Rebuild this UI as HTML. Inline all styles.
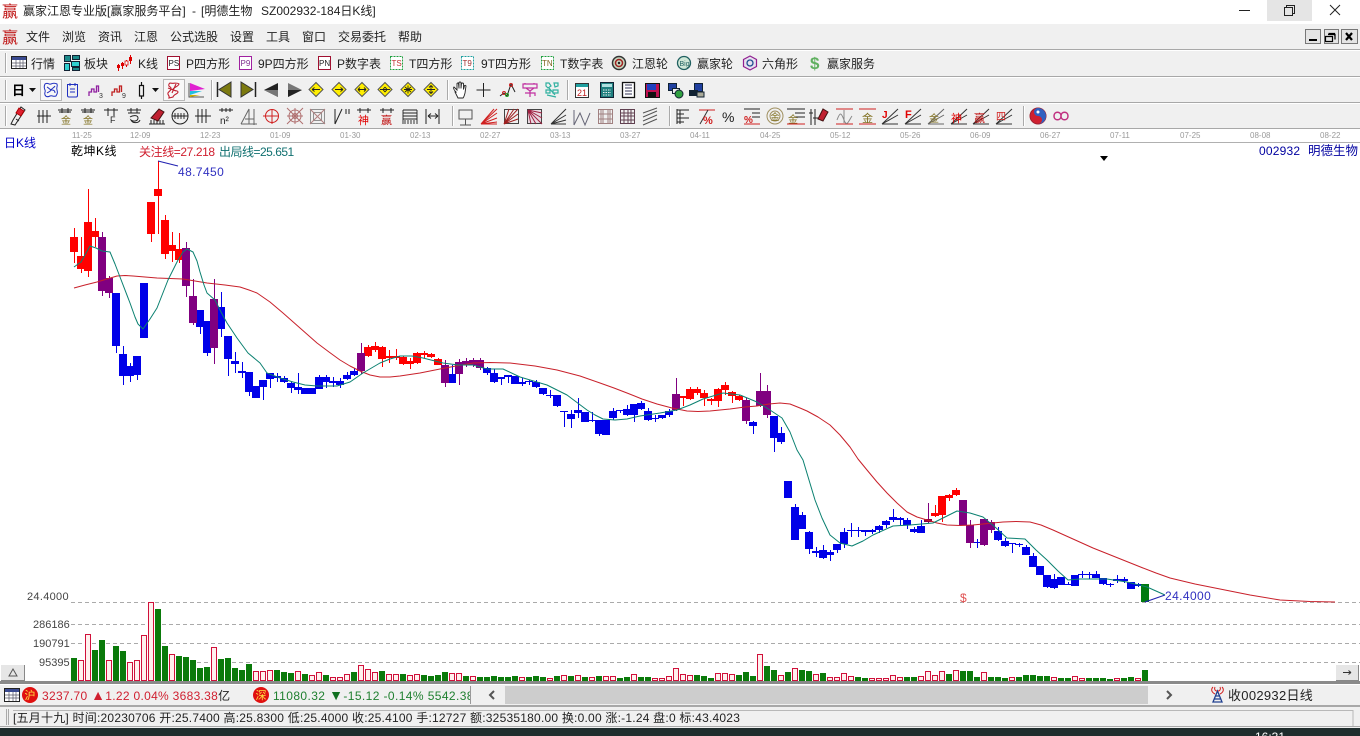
<!DOCTYPE html>
<html><head><meta charset="utf-8"><title>赢家江恩专业版</title>
<style>
html,body{margin:0;padding:0;background:#fff;overflow:hidden}
svg{display:block}
text{font-family:"Liberation Sans","Noto Sans CJK SC",sans-serif;font-size:12px;fill:#222}
.d{font-size:8px;fill:#999}
.a{font-size:11px;fill:#444}
.i{font-size:8px}
</style></head><body>
<svg width="1360" height="736" viewBox="0 0 1360 736" xmlns="http://www.w3.org/2000/svg">
<!-- backgrounds -->
<rect width="1360" height="736" fill="#fff"/>
<rect y="24" width="1360" height="105" fill="#f0f0f0"/>
<g fill="#a8a8a8"><rect y="49" width="1360" height="1"/><rect y="76" width="1360" height="1"/><rect y="102" width="1360" height="1"/><rect y="128" width="1360" height="1"/></g>
<g fill="#fff"><rect y="50" width="1360" height="1"/><rect y="77" width="1360" height="1"/><rect y="103" width="1360" height="1"/></g>
<!-- title -->
<text x="2" y="17" style="font-size:16px;fill:#c01818">赢</text>
<text x="23" y="15">赢家江恩专业版[赢家服务平台]</text><text x="192" y="15">-</text><text x="201" y="15">[明德生物</text><text x="261" y="15">SZ002932-184日K线]</text>
<rect x="1267" width="45" height="21" fill="#e5e5e5"/>
<path d="M1239 10.500h11" stroke="#222"/>
<path d="M1284.500 7.500h8v8h-8zM1286.500 7.500v-2h8v8h-2" fill="none" stroke="#222"/>
<path d="M1330 5l10 10M1340 5l-10 10" stroke="#222"/>
<!-- menu -->
<text x="2" y="43" style="font-size:16px;fill:#c01818">赢</text>
<g><text x="26" y="41">文件</text><text x="62" y="41">浏览</text><text x="98" y="41">资讯</text><text x="134" y="41">江恩</text><text x="170" y="41">公式选股</text><text x="230" y="41">设置</text><text x="266" y="41">工具</text><text x="302" y="41">窗口</text><text x="338" y="41">交易委托</text><text x="398" y="41">帮助</text></g>
<!-- mdi buttons -->
<g fill="#e4e4e4" stroke="#777"><rect x="1305.500" y="29.500" width="15" height="14"/><rect x="1324.500" y="29.500" width="14" height="14"/><rect x="1341.500" y="29.500" width="16" height="14"/></g>
<path d="M1309 40h8" stroke="#000" stroke-width="2"/>
<path d="M1328.500 33.500h6v2M1325.500 36.500h7v5h-7zM1328 34.500h7v5" fill="none" stroke="#000" stroke-width="1.200"/>
<path d="M1346 33l6 7M1352 33l-6 7" stroke="#000" stroke-width="2.200"/>
<!-- grips -->
<g stroke="#aaa"><path d="M5.500 53v20M5.500 80v20M5.500 106v20M211.500 80v20M447.500 80v20M452.500 106v20M567.500 80v20M669.500 106v20M1023.500 106v20"/></g>
<g stroke="#fff"><path d="M6.500 53v20M6.500 80v20M6.500 106v20M212.500 80v20M448.500 80v20M453.500 106v20M568.500 80v20M670.500 106v20M1024.500 106v20"/></g>
<!-- toolbar 1 -->
<g>
<rect x="11.500" y="56.500" width="15" height="12" fill="#fff" stroke="#222"/><rect x="12" y="57" width="14" height="3" fill="#3a4a90"/><path d="M12 63h14M12 66h14M16 60v8M20 60v8M23 60v8" stroke="#556" stroke-width=".7"/>
<g fill="#1c8a8a" stroke="#123"><rect x="64.500" y="55.500" width="6" height="6"/><rect x="72.500" y="55.500" width="7" height="4"/><rect x="64.500" y="63.500" width="5" height="7" fill="#30d0d0"/><rect x="71.500" y="61.500" width="8" height="5" fill="#30d0d0"/><rect x="72.500" y="67.500" width="7" height="3"/></g>
<path d="M118.500 64v7M122.500 62v7M126.500 60v7M130.500 55v9" stroke="#d00"/><path d="M117 65h3v3h-3zM121 63h3v3h-3zM129 57h3v4h-3z" fill="#d00"/><path d="M125 61h3v4h-3z" fill="#fff" stroke="#d00" stroke-width=".8"/>
<text x="138" y="68">K线</text>
<text x="31" y="68">行情</text><text x="84" y="68">板块</text>
<rect x="167.500" y="56.500" width="12" height="13" fill="#fff" stroke="#a01030"/><text class="i" x="168.500" y="66">PS</text><text x="186" y="68">P四方形</text>
<rect x="239.500" y="56.500" width="12" height="13" fill="#fff" stroke="#a020a0"/><text class="i" x="240.500" y="66" style="fill:#803090">P9</text><text x="258" y="68">9P四方形</text>
<rect x="318.500" y="56.500" width="12" height="13" fill="#fff" stroke="#a01030"/><text class="i" x="319" y="66">PN</text><text x="337" y="68">P数字表</text>
<rect x="390.500" y="56.500" width="12" height="13" fill="#fff" stroke="#20a040" stroke-dasharray="2 1"/><text class="i" x="391.500" y="66" style="fill:#c03030">TS</text><text x="409" y="68">T四方形</text>
<rect x="461.500" y="56.500" width="12" height="13" fill="#fff" stroke="#20a0a0" stroke-dasharray="2 1"/><text class="i" x="462.500" y="66" style="fill:#a03030">T9</text><text x="481" y="68">9T四方形</text>
<rect x="541.500" y="56.500" width="12" height="13" fill="#fff" stroke="#20a040" stroke-dasharray="2 1"/><text class="i" x="542" y="66" style="fill:#806020">TN</text><text x="560" y="68">T数字表</text>
<circle cx="619" cy="63" r="6.500" fill="#c8d8c0" stroke="#333" stroke-width="1.500"/><circle cx="619" cy="63" r="3.500" fill="none" stroke="#a02020" stroke-width="1.500"/><circle cx="619" cy="63" r="1.200" fill="#222"/><text x="632" y="68">江恩轮</text>
<circle cx="684" cy="63" r="6.500" fill="#d0e8d8" stroke="#206060" stroke-width="1.300"/><text x="679.500" y="66" style="font-size:7px;fill:#206060">Big</text><text x="697" y="68">赢家轮</text>
<path d="M750 56l6.500 3.500v7l-6.500 3.500-6.500-3.500v-7z" fill="#e8e0f0" stroke="#902090" stroke-width="1.200"/><circle cx="750" cy="63" r="3" fill="none" stroke="#205090" stroke-width="1.300"/><text x="762" y="68">六角形</text>
<text x="810" y="69" style="font-size:17px;font-weight:bold;fill:#60b060">$</text><text x="827" y="68">赢家服务</text>
</g>
<!-- toolbar 2 -->
<g>
<text x="12" y="95" style="font-size:13px;font-weight:bold;fill:#000">日</text><path d="M29 88h7l-3.500 4z" fill="#111"/>
<rect x="40.500" y="79.500" width="21" height="21" fill="#f8f8f8" stroke="#b8b8b8"/>
<path d="M45 84c3-2 4 1 6 0s4-1 6 0c1 3-1 3 0 6s0 4-1 6c-3 1-4-1-6 0s-4 1-5-1c-1-3 1-3 0-5s-1-4 0-6zM47 87c2 1 3 3 5 3s3 1 3 3M55 86c-1 2-3 2-4 4s-3 2-4 3" fill="none" stroke="#2030c0"/>
<path d="M67.500 84.500h10v11q0 1.500-1.500 1.500h-7q-1.500 0-1.500-1.500zM70 83v3M75 83v3M70 89h5M70 92h5" fill="none" stroke="#2030c0"/>
<path d="M89 96v-4h2.500v-3h2.500v3h2.500v-6h2v6" fill="none" stroke="#9020a0" stroke-width="1.300"/><text class="i" x="99" y="98" style="fill:#333;font-size:7px">3</text>
<path d="M112 96v-4h2.500v-3h2.500v3h2.500v-6h2v6" fill="none" stroke="#c02020" stroke-width="1.300"/><text class="i" x="122" y="98" style="fill:#333;font-size:7px">9</text>
<path d="M141.500 82v3M141.500 96v3M139.500 85.500h4v10.500h-4z" fill="none" stroke="#111" stroke-width="1.200"/><path d="M152 88h7l-3.500 4z" fill="#111"/>
<rect x="163.500" y="79.500" width="21" height="21" fill="#f8f8f8" stroke="#b8b8b8"/>
<path d="M170 83c3 1 7-1 9 1-1 3-5 3-6 5s5 1 5 3-4 2-5 5l-4 1c1-3-2-3-1-5s4-3 3-5-3-1-2-4zM168 88l8 3M176 84l-4 9" fill="none" stroke="#c02030" stroke-width="1.100"/>
<path d="M189 83v14h15" fill="none" stroke="#555"/><path d="M190 83l15 6-15 2z" fill="#e020d0"/><path d="M190 91l12 0-12 4z" fill="#20c0e0"/><path d="M190 95h10l-10 2z" fill="#d0b000"/>
<path d="M217.500 82v15" stroke="#222" stroke-width="1.500"/><path d="M231 82v15l-12-7.500z" fill="#7c7a10" stroke="#333"/>
<path d="M255.500 82v15" stroke="#222" stroke-width="1.500"/><path d="M241 82v15l12-7.500z" fill="#7c7a10" stroke="#333"/>
<path d="M278 83v14l-14-7z" fill="#222"/><path d="M278 90v7l-14-7z" fill="#777"/>
<path d="M288 83v14l14-7z" fill="#777"/><path d="M288 90v7l14-7z" fill="#222"/>
<g fill="#ffee00" stroke="#555"><path d="M316 82.500l7 7-7 7-7-7zM339 82.500l7 7-7 7-7-7zM362 82.500l7 7-7 7-7-7zM385 82.500l7 7-7 7-7-7zM408 82.500l7 7-7 7-7-7zM431 82.500l7 7-7 7-7-7z"/></g>
<path d="M312 89.500h8M312 89.500l2.500-2M312 89.500l2.500 2M335 89.500h8M343 89.500l-2.500-2M343 89.500l-2.500 2M358 89.500h8M358 89.500l2-2M358 89.500l2 2M366 89.500l-2-2M366 89.500l-2 2M380 89.500h10M385 87l-2 2.500 2 2.500M385 87l2 2.500-2 2.500M404 89.500h8M408 85.500v8M405 87l3 2.500 3-2.500M405 92l3-2.500 3 2.500M427 89.500h8M431 85.500v8M429 87.500l2-2 2 2M429 91.500l2 2 2-2" fill="none" stroke="#222" stroke-width=".9"/>
<path d="M456 92c-2-2-3-4-2-5l3 3v-6.500q1-1 1.500 0l.5 5v-6q1-1 2 0v6l.5-5q1-1 2 0v6l1-4q1-.5 1.500 .5l-1 7c-.5 2-1 4-2 5h-5c-1-2-2-4-3-6z" fill="#fff" stroke="#222" stroke-width=".9"/>
<path d="M483.500 83v14M476.500 90h14" stroke="#222"/>
<path d="M500 96l4-3 3 3 4-12 4 8" fill="none" stroke="#222"/><circle cx="504" cy="93" r="1.500" fill="none" stroke="#d02020"/><circle cx="507" cy="95" r="1.500" fill="none" stroke="#20a020"/><circle cx="511" cy="85" r="1.500" fill="none" stroke="#d02020"/>
<path d="M523 84h14v4h-14zM525 84v-1M534 84v-1M526 88l4 3 4-3M530 91v6M525 93h10v3" fill="none" stroke="#c030a0" stroke-width="1.200"/>
<path d="M546 83h3l2 3-3 2-2-2zM554 83h4v3l-3 1zM546 90h4v3h-4zM553 90h5v3h-5zM547 95l9 2M549 88l6 7" fill="none" stroke="#30b0a0" stroke-width="1.200"/>
<rect x="575.500" y="83.500" width="13" height="14" fill="#fff" stroke="#333"/><rect x="576" y="84" width="12" height="3" fill="#20a0a0"/><text x="577" y="96" style="font-size:9px;fill:#c02020">21</text>
<rect x="600.500" y="82.500" width="13" height="15" fill="#208080" stroke="#123"/><rect x="602" y="84" width="10" height="3" fill="#b0e0e0"/><path d="M603 90h8M603 92.500h8M603 95h8" stroke="#eee" stroke-dasharray="1.500 1"/>
<rect x="622.500" y="82.500" width="12" height="15" fill="#fff" stroke="#111" stroke-width="1.300"/><path d="M625 85h7M625 88h7M625 91h7M625 94h7" stroke="#335"/>
<rect x="645.500" y="83.500" width="14" height="14" fill="#c01050" stroke="#111"/><rect x="647" y="84" width="9" height="6" fill="#2040c0"/><rect x="648" y="92" width="8" height="5" fill="#111"/>
<rect x="668.500" y="83.500" width="8" height="7" fill="#2040a0" stroke="#123"/><rect x="672.500" y="88.500" width="7" height="5" fill="#eee" stroke="#123"/><circle cx="679" cy="94" r="4" fill="#30a040" stroke="#123"/>
<rect x="694.500" y="83.500" width="8" height="8" fill="#2040a0" stroke="#123"/><rect x="689.500" y="90.500" width="8" height="5" fill="#123" stroke="#123"/><rect x="697" y="92" width="7" height="5" fill="#aa9" stroke="#123"/>
</g>
<!-- toolbar 3 -->
<g fill="none" stroke="#222">
<path d="M11 124l4 1 10-15-4-3-8 13zM16 119l3 2" /><path d="M19 108l5 3-3 5-5-3z" fill="#e02030" stroke="#a00"/>
<path d="M37 116h14M39 110v13M43 110v13M47 110v13"/>
<path d="M58 110h14M62 108v5M68 108v5M59 112h12"/><text x="61" y="124" style="font-size:10px;fill:#807020;stroke:none">金</text>
<path d="M81 110h14M85 108v5M91 108v5M82 112h12"/><text x="83" y="124" style="font-size:10px;fill:#807020;stroke:none">金</text>
<path d="M104 110h14M108 108v8M114 108v8"/><text x="110" y="123" style="font-size:9px;fill:#222;stroke:none">F</text>
<path d="M127 110h14M131 108v5M137 108v5M128 113h12M130 117c3-2 8-2 8 1s-4 4-7 2c2 4 8 3 9 0"/>
<path d="M149 124h16M151 120v4M154 120v4M157 120v4M160 120v4M163 120v4"/><path d="M151 118l8-9 5 3-6 9z" fill="#c02030" stroke="#411"/>
<circle cx="180" cy="116" r="8"/><path d="M172 116h16M175 113v6M178 113v6M181 113v6M184 113v6" stroke-width=".9"/>
<path d="M195 116h16M198 109v14M202 109v14M206 109v14"/>
<path d="M219 110h14M222 108v4M226 108v4M230 108v4"/><text x="220" y="124" style="font-size:10px;fill:#222;stroke:none">n²</text>
<path d="M241 124l8-15M249 109v15M241 124h16M254 109v16M245 119h9" stroke="#666"/>
<g stroke="#d02020"><circle cx="272" cy="116" r="6.500"/><path d="M263 116h16"/><path d="M272 109v15"/></g>
<g stroke="#b07070"><circle cx="295" cy="116" r="6"/><circle cx="295" cy="116" r="2.500"/><path d="M287 108l16 16M303 108l-16 16M287 116h16M295 108v16"/></g>
<g stroke="#909090"><rect x="310.500" y="109.500" width="14" height="14"/><rect x="313.500" y="112.500" width="8" height="8"/><path d="M310 109l15 15M325 109l-15 15" stroke="#b08080"/></g>
<path d="M335 124v-15M335 124l7-15M346 109v5M349 109v5" />
<path d="M357 110h14M360 108v5M368 108v5"/><text x="358" y="124" style="font-size:11px;fill:#e00000;stroke:none">神</text>
<path d="M380 110h14M383 108v5M391 108v5"/><text x="381" y="124" style="font-size:11px;fill:#c01010;stroke:none">赢</text>
<path d="M403 110h14M403 110v14M417 110v14M403 113h14M403 116h14M403 119h14" stroke-width=".9"/><path d="M405 120v4M408 120v4M411 120v4M414 120v4" stroke-width=".9"/>
<path d="M426 109v15M439 109v15M428 116h10M428 116l3-2.500M428 116l3 2.500M438 116l-3-2.500M438 116l-3 2.500"/>
<path d="M459 110h13v9h-13zM465.500 119v6M460 125h11" stroke="#555"/>
<g stroke="#d02020"><path d="M481 124l16-15M481 124l13-15M481 124l16-11M481 124l16-6M481 124l16-2M481 124h16"/></g>
<g stroke="#a02020"><rect x="504.500" y="109.500" width="14" height="14" stroke="#444"/><path d="M504 124l14-15M504 124l14-10M504 124l14-5M504 124l10-15M504 124l5-15"/></g>
<g stroke="#a02040"><rect x="527.500" y="109.500" width="14" height="14" stroke="#444" fill="#e8d8e0"/><path d="M528 110l14 14M528 110l14 8M528 110l14 3M528 110l8 14M528 110l3 14"/></g>
<path d="M551 124l15-15M551 124l15-9M551 124h15M551 124l15-4" stroke="#333"/>
<path d="M574 110v15M574 125l6-12 5 12 5-12" stroke="#667"/>
<g stroke="#a08080"><rect x="598.500" y="109.500" width="14" height="14"/><path d="M598 114h15M598 119h15M603 109v15M608 109v15M601 109v15M610 109v15"/></g>
<g stroke="#604050"><rect x="620.500" y="109.500" width="14" height="14"/><path d="M620 113h15M620 116h15M620 120h15M624 109v15M628 109v15M631 109v15"/></g>
<path d="M643 117l14-6M643 121l14-6M643 125l14-6M643 113l14-5" stroke="#555"/>
<path d="M677 109v15M677 110h12M677 114h7M677 118h12M677 122h7M680 110v14M689 110h-2M689 118h-2"/>
<path d="M699 110h16" stroke="#d02020"/><path d="M700 124l8-14" stroke="#333"/><text x="703" y="124" style="font-size:11px;fill:#d02020;stroke:none;font-weight:bold">%</text>
<text x="722" y="122" style="font-size:14px;fill:#222;stroke:none">%</text>
<path d="M744 109h16M752 113h8M752 117h8" stroke="#222"/><path d="M744 124h16" stroke="#d02020"/><text x="744" y="123" style="font-size:10px;fill:#d02020;stroke:none;font-weight:bold">%</text>
<circle cx="775" cy="116" r="8" stroke="#a09060"/><circle cx="775" cy="116" r="5" stroke="#a09060"/><text x="770.500" y="120" style="font-size:9px;fill:#807020;stroke:none">金</text>
<path d="M787 109h18M795 113h10M795 117h10" stroke="#222"/><path d="M787 124h18" stroke="#d02020"/><text x="788" y="123" style="font-size:10px;fill:#807020;stroke:none">金</text>
<path d="M811 109v16M815 109v16M809 113h4M813 118h5"/><path d="M818 119l5-10 5 3-5 9z" fill="#c02030" stroke="#411"/>
<path d="M836 109h17M836 124h17" stroke="#d02020"/><path d="M837 120c3-8 4-8 7 0s5 0 8-4M844 110v13" stroke="#888"/>
<path d="M859 109h17M859 124h17" stroke="#d02020"/><text x="862" y="122" style="font-size:11px;fill:#807020;stroke:none">金</text>
<path d="M882 124l16-9M882 124h16M882 124l16-15" stroke="#333"/><text x="882" y="118" style="font-size:10px;fill:#e00000;stroke:none;font-weight:bold">J</text>
<path d="M905 124l16-9M905 124h16M905 124l16-15" stroke="#333"/><text x="905" y="118" style="font-size:11px;fill:#e00000;stroke:none;font-weight:bold">F</text>
<path d="M928 124l16-9M928 124h16M928 124l16-15" stroke="#666"/><text x="929" y="122" style="font-size:10px;fill:#807020;stroke:none">金</text>
<path d="M951 124l16-9M951 124h16M951 124l16-15" stroke="#333"/><text x="951" y="122" style="font-size:11px;fill:#e00000;stroke:none">神</text>
<path d="M973 124l16-9M973 124h16M973 124l16-15" stroke="#333"/><text x="974" y="122" style="font-size:11px;fill:#c01010;stroke:none">赢</text>
<path d="M996 124l16-9M996 124h16M996 124l16-15" stroke="#333"/><text x="996" y="120" style="font-size:10px;fill:#d02020;stroke:none">四</text>
<circle cx="1038" cy="116" r="8" fill="#d02030" stroke="#a02030"/><path d="M1038 108a8 8 0 0 1 0 16a4 4 0 0 0 0-8a4 4 0 0 1 0-8z" fill="#3060c0" stroke="none"/><circle cx="1038" cy="112" r="1.500" fill="#fff" stroke="none"/>
<path d="M1054 116c0-5 7-5 7 0s7 5 7 0-7-5-7 0-7 5-7 0z" stroke="#c03080" stroke-width="1.500"/>
</g>
<!-- chart head -->
<rect y="129" width="1360" height="553" fill="#fff"/>
<path d="M71 142.500H1360" stroke="#b0b0b0"/>
<g><text class="d" x="72" y="138">11-25</text><text class="d" x="130" y="138">12-09</text><text class="d" x="200" y="138">12-23</text><text class="d" x="270" y="138">01-09</text><text class="d" x="340" y="138">01-30</text><text class="d" x="410" y="138">02-13</text><text class="d" x="480" y="138">02-27</text><text class="d" x="550" y="138">03-13</text><text class="d" x="620" y="138">03-27</text><text class="d" x="690" y="138">04-11</text><text class="d" x="760" y="138">04-25</text><text class="d" x="830" y="138">05-12</text><text class="d" x="900" y="138">05-26</text><text class="d" x="970" y="138">06-09</text><text class="d" x="1040" y="138">06-27</text><text class="d" x="1110" y="138">07-11</text><text class="d" x="1180" y="138">07-25</text><text class="d" x="1250" y="138">08-08</text><text class="d" x="1320" y="138">08-22</text></g>
<text x="4" y="147" style="fill:#0000c8">日K线</text>
<text x="71" y="155" style="fill:#000;letter-spacing:.5px">乾坤K线</text>
<text x="139" y="156" style="fill:#d02030;letter-spacing:-.4px">关注线=27.218</text>
<text x="219" y="156" style="fill:#107070;letter-spacing:-.5px">出局线=25.651</text>
<text x="1259" y="155" style="fill:#0000a0;letter-spacing:.2px">002932</text>
<text x="1308" y="155" style="fill:#0000a0;font-size:12.500px">明德生物</text>
<path d="M1100 156h8l-4 5z" fill="#000"/>
<!-- dashes -->
<path d="M71 602.500H1360M71 624.500H1360M71 643.500H1360M71 662.500H1360" stroke="#aaa" stroke-dasharray="4 3"/>
<text class="a" x="27" y="600" style="letter-spacing:.3px">24.4000</text>
<text class="a" x="33" y="628">286186</text>
<text class="a" x="33" y="647">190791</text>
<text class="a" x="39" y="666">95395</text>
<!-- volumes -->
<path fill="none" stroke="#0a7a0a" stroke-width="6" d="M74 658V681M95 650V681M102 640V681M116 646V681M123 651V681M158 609V681M165 646V681M179 656V681M186 657V681M193 660V681M200 668V681M207 667V681M221 659V681M228 658V681M235 668V681M242 670V681M249 664V681M277 670V681M284 672V681M291 673V681M305 674V681M326 675V681M354 672V681M382 671V681M403 674V681M424 675V681M431 676V681M438 675V681M445 672V681M466 676V681M480 677V681M487 677V681M494 676V681M501 677V681M508 677V681M515 676V681M529 677V681M536 676V681M543 677V681M557 676V681M571 676V681M585 677V681M599 676V681M620 678V681M627 677V681M641 677V681M648 677V681M697 675V681M704 676V681M711 678V681M739 675V681M746 672V681M753 676V681M767 666V681M774 670V681M788 672V681M802 670V681M809 671V681M823 673V681M858 677V681M865 678V681M907 677V681M914 677V681M949 674V681M963 671V681M970 671V681M977 677V681M991 677V681M998 677V681M1005 678V681M1019 677V681M1026 675V681M1033 675V681M1040 676V681M1047 676V681M1061 678V681M1068 678V681M1089 678V681M1096 678V681M1103 678V681M1110 679V681M1124 678V681M1131 677V681M1145 670V681"/>
<path fill="none" stroke="#d0103a" stroke-width="6" d="M81 660V681M88 634V681M109 660V681M130 662V681M137 660V681M144 635V681M151 602V681M172 654V681M214 647V681M256 671V681M263 671V681M270 670V681M298 671V681M312 675V681M319 672V681M333 677V681M340 677V681M347 674V681M361 665V681M368 669V681M375 672V681M389 674V681M396 674V681M410 675V681M417 674V681M452 673V681M459 673V681M473 676V681M522 677V681M550 678V681M564 675V681M578 675V681M592 677V681M606 676V681M613 676V681M634 674V681M655 678V681M662 678V681M669 676V681M676 668V681M683 674V681M690 675V681M718 673V681M725 673V681M732 674V681M760 654V681M781 675V681M795 668V681M816 674V681M830 677V681M837 677V681M844 673V681M851 676V681M872 678V681M879 678V681M886 678V681M893 675V681M900 677V681M921 676V681M928 671V681M935 675V681M942 671V681M956 670V681M984 672V681M1012 677V681M1054 677V681M1075 676V681M1082 678V681M1117 678V681M1138 678V681"/>
<path fill="none" stroke="#fff0ee" stroke-width="4" transform="translate(0,1)" d="M81 660V679M88 634V679M109 660V679M130 662V679M137 660V679M144 635V679M151 602V679M172 654V679M214 647V679M256 671V679M263 671V679M270 670V679M298 671V679M312 675V679M319 672V679M333 677V679M340 677V679M347 674V679M361 665V679M368 669V679M375 672V679M389 674V679M396 674V679M410 675V679M417 674V679M452 673V679M459 673V679M473 676V679M522 677V679M550 678V679M564 675V679M578 675V679M592 677V679M606 676V679M613 676V679M634 674V679M655 678V679M662 678V679M669 676V679M676 668V679M683 674V679M690 675V679M718 673V679M725 673V679M732 674V679M760 654V679M781 675V679M795 668V679M816 674V679M830 677V679M837 677V679M844 673V679M851 676V679M872 678V679M879 678V679M886 678V679M893 675V679M900 677V679M921 676V679M928 671V679M935 675V679M942 671V679M956 670V679M984 672V679M1012 677V679M1054 677V679M1075 676V679M1082 678V679M1117 678V679M1138 678V679"/>
<!-- candles: red -->
<path fill="none" stroke="#f00" d="M74.500 228V263M81.500 237V273M88.500 189V277M95.500 218V247M151.500 202V242M158.500 161V234M165.500 215V259M172.500 232V262M179.500 233V263M368.500 345V357M375.500 342V352M382.500 346V367M389.500 350V363M396.500 349V360M403.500 356V365M410.500 358V369M417.500 352V364M424.500 351V358M431.500 353V358M438.500 358V365M683.500 396V406M690.500 387V400M697.500 387V395M704.500 390V406M711.500 398V405M718.500 388V407M725.500 382V395M732.500 391V403M739.500 395V401M935.500 505V517M942.500 496V522M949.500 494V501M956.500 488V496"/>
<path fill="none" stroke="#f00" stroke-width="8" d="M74 237V252M81 256V269M88 222V271M95 231V237M151 202V234M158 189V196M165 220V254M172 245V251M179 249V260M368 347V356M375 346V350M382 347V359M389 356V358M396 356V358M403 357V364M410 361V364M417 353V363M424 353V355M431 354V357M438 359V365M683 396V398M690 389V399M697 389V393M704 393V398M711 399V401M718 389V401M725 385V390M732 392V396M739 396V400M935 513V516M942 496V515M949 495V498M956 490V495"/>
<!-- blue -->
<path fill="none" stroke="#0000e8" d="M116.500 293V353M123.500 346V385M130.500 363V382M137.500 356V380M200.500 310V334M207.500 321V356M221.500 292V337M228.500 336V376M235.500 352V373M242.500 362V378M249.500 372V396M256.500 386V398M263.500 380V400M270.500 373V388M277.500 373V382M284.500 376V383M291.500 382V393M298.500 373V394M305.500 388V394M312.500 388V394M319.500 375V389M326.500 375V388M333.500 377V387M340.500 378V388M347.500 372V380M354.500 368V376M452.500 365V383M487.500 367V375M494.500 369V383M501.500 377V385M508.500 375V383M515.500 376V384M522.500 378V386M529.500 380V385M536.500 380V388M543.500 388V395M550.500 390V398M557.500 395V407M564.500 411V427M571.500 410V428M578.500 398V418M585.500 412V422M592.500 412V422M599.500 420V436M606.500 420V435M613.500 408V420M620.500 410V413M627.500 405V416M634.500 404V422M641.500 401V410M648.500 408V421M655.500 415V422M662.500 415V419M669.500 409V417M753.500 421V434M774.500 416V452M781.500 427V444M795.500 504V540M802.500 512V529M809.500 531V554M816.500 547V557M823.500 545V559M830.500 550V561M837.500 544V553M844.500 528V548M851.500 523V537M858.500 527V537M865.500 530V536M872.500 529V534M879.500 525V533M886.500 520V528M893.500 509V522M900.500 517V525M907.500 518V529M914.500 527V533M921.500 520V533M977.500 539V548M998.500 527V541M1005.500 538V547M1012.500 543V553M1019.500 543V547M1026.500 545V555M1033.500 553V567M1040.500 566V575M1047.500 575V588M1054.500 574V589M1061.500 577V585M1068.500 582V585M1075.500 575V586M1082.500 571V578M1089.500 572V579M1096.500 571V578M1103.500 578V585M1110.500 583V587M1117.500 575V583M1124.500 577V583M1131.500 582V589M1138.500 583V587"/>
<path fill="none" stroke="#0000e8" stroke-width="8" d="M116 293V346M123 354V376M130 366V376M137 356V375M144 283V338M200 310V327M207 321V353M221 307V329M228 336V359M235 361V364M242 371V373M249 372V392M256 386V398M263 380V387M270 373V379M277 376V378M284 378V382M291 383V388M298 387V390M305 388V394M312 388V394M319 377V389M326 377V382M333 381V383M340 381V385M347 375V379M354 371V375M452 374V383M487 368V373M494 373V382M501 377V379M508 375V377M515 376V384M522 382V384M529 381V382M536 382V387M543 388V394M550 395V396M557 395V406M564 411V412M571 414V419M578 410V413M585 412V422M592 420V421M599 420V434M606 420V435M613 411V418M620 410V411M627 409V415M634 404V415M641 403V409M648 411V420M655 418V419M662 415V418M669 411V415M753 422V426M774 416V438M781 433V442M788 481V498M795 507V540M802 515V529M809 532V549M816 551V553M823 550V558M830 552V555M837 544V550M844 532V544M851 530V531M858 530V531M865 530V532M872 530V532M879 526V530M886 521V525M893 517V520M900 518V520M907 520V525M914 529V532M921 526V533M977 542V543M998 531V540M1005 541V546M1012 543V544M1019 544V545M1026 547V555M1033 556V567M1040 566V575M1047 575V587M1054 579V588M1061 577V585M1068 584V585M1075 575V586M1082 574V575M1089 574V575M1096 574V578M1103 578V584M1110 584V585M1117 579V581M1124 579V581M1131 582V589M1138 584V586"/>
<!-- purple -->
<path fill="none" stroke="#800080" d="M102.500 232V296M109.500 276V298M186.500 242V297M193.500 279V325M214.500 279V364M361.500 343V374M445.500 360V387M459.500 359V385M466.500 358V367M473.500 358V367M480.500 358V370M676.500 378V411M746.500 398V424M760.500 373V407M767.500 385V418M928.500 503V523M963.500 500V525M970.500 520V548M984.500 519V546M991.500 520V533"/>
<path fill="none" stroke="#800080" stroke-width="8" d="M102 237V291M109 278V293M186 248V286M193 296V323M214 299V348M361 353V371M445 365V383M459 362V374M466 361V365M473 360V365M480 360V368M676 394V410M746 400V421M760 391V406M767 391V415M963 500V525M970 525V543M984 519V545M991 522V530"/>
<path fill="none" stroke="#900040" stroke-width="8" d="M928 519V522"/>
<path fill="none" stroke="#007a10" stroke-width="8" d="M1145 584V602"/>
<!-- moving averages -->
<polyline fill="none" stroke="#c8202a" stroke-width="1" stroke-linejoin="round" points="74,288 85,285 97,282 107,279 117,276 125,275.500 133,276 145,277 157,278 170,278.500 183,279 195,281 207,283 225,285 240,287 249,290 257,293 270,302 283,313 300,328 317,343 329,352 340,360 350,366 360,371 370,375 380,377 390,377 400,376 420,373 440,369 456,366 473,363 490,362.500 510,363 535,366 557,370 580,376 600,383 614,388 627,393 642,399 657,404 672,408 687,411 698,411.500 710,411 720,410 730,409 745,407 757,406 769,404 780,403 790,404 800,408 807,411 818,417 830,425 840,435 850,447 858,459 867,470 877,482 887,493 897,503 907,512 917,517 927,520 937,523 947,525 960,525.500 973,525 988,523.500 1003,522 1016,521.500 1030,522 1041,525 1053,530 1073,539 1093,548 1118,558 1143,568 1156,573 1170,578 1195,584 1220,589 1250,595 1280,600 1310,601.500 1335,602"/>
<polyline fill="none" stroke="#0a8070" stroke-width="1" stroke-linejoin="round" points="74,267 81,262 90,246 96,248 102,251 110,252 115,264 120,277 130,303 135,317 138,324 143,329 150,319 157,308 168,280 178,260 183,252 187,249 193,252 197,261 200,272 204,285 207,293 215,300 221,312 227,323 237,338 248,353 260,363 267,373 280,378 293,382 305,385 317,386 337,386 350,382 363,373 380,363 390,359 400,356 412,356 423,358 443,363 458,365 473,365 487,369 503,369 520,377 547,385 567,395 587,410 595,415 603,419 615,420 627,419 640,416 660,413 677,410 690,405 703,399 723,393 740,395 757,402 770,410 782,418 790,432 797,450 803,460 806,470 815,500 822,518 830,535 840,543 852,546 863,541 873,535 893,526 910,525 933,523 945,517 957,511 970,513 983,517 995,527 1007,538 1025,539 1036,550 1047,560 1058,571 1068,580 1080,579 1107,579 1127,582 1147,587 1165,595"/>
<!-- annotations -->
<path d="M158 161l20 5" stroke="#2020b0" fill="none"/>
<text x="178" y="176" style="fill:#3030c0;letter-spacing:.4px">48.7450</text>
<path d="M1145 602l20-7" stroke="#2020b0" fill="none"/>
<text x="1165" y="600" style="fill:#3030c0;letter-spacing:.4px">24.4000</text>
<text x="960" y="602" style="fill:#e05050">$</text>
<!-- scroll buttons -->
<rect x="1" y="665" width="23" height="16" fill="#e6e6e6"/><path d="M1 680.500H24.500V665" fill="none" stroke="#888"/><path d="M9 676h8l-4-7z" fill="none" stroke="#555"/>
<rect x="1336" y="665" width="22" height="16" fill="#e6e6e6"/><path d="M1336 680.500H1358.500V665" fill="none" stroke="#888"/><path d="M1343 672.500h8M1351 672.500l-2.500-2M1351 672.500l-2.500 2" fill="none" stroke="#333"/>
<!-- base -->
<rect y="681" width="1360" height="47" fill="#f0f0f0"/>
<rect y="681" width="1360" height="3" fill="#8a8a8a"/>
<rect y="684" width="1360" height="1" fill="#fff"/>
<rect y="705" width="1360" height="2" fill="#a8a8a8"/>
<rect y="726" width="1360" height="1" fill="#a8a8a8"/>
<path d="M13 710.500H1353V726" fill="none" stroke="#b8b8b8"/>
<path d="M6.500 709v16M8.500 709v16" stroke="#aaa"/>
<rect y="728" width="1360" height="8" fill="#1f2d2d"/>
<text x="1255" y="741" style="fill:#fff">16:31</text>
<!-- status1 -->
<rect x="4.500" y="688.500" width="15" height="13" fill="#fff" stroke="#222"/><rect x="5" y="689" width="14" height="3" fill="#3a4a90"/><path d="M5 695h14M5 698h14M9 692v9M13 692v9M16 692v9" stroke="#556" stroke-width=".7"/>
<circle cx="30" cy="695" r="8" fill="#e01010"/><text x="24.500" y="699" style="font-size:11px;fill:#ffe040">沪</text>
<text x="42" y="700" style="fill:#d02030;letter-spacing:.3px">3237.70 <tspan style="font-size:14px">▲</tspan>1.22 0.04% 3683.38<tspan style="fill:#222">亿</tspan></text>
<circle cx="261" cy="695" r="8" fill="#e01010"/><text x="255.500" y="699" style="font-size:11px;fill:#ffe040">深</text>
<text x="273" y="700" style="fill:#208030;letter-spacing:.4px">11080.32 <tspan style="font-size:14px;fill:#107020">▼</tspan>-15.12 -0.14% 5542.38亿</text>
<!-- scrollbar -->
<rect x="470" y="685" width="737" height="20" fill="#f0f0f0"/>
<path d="M470.500 686v18" stroke="#999"/>
<rect x="505" y="686" width="643" height="18" fill="#cdcdcd"/>
<path d="M494 691l-4 4 4 4M1167 691l4 4-4 4" fill="none" stroke="#555" stroke-width="2"/>
<!-- antenna -->
<path d="M1217.500 691L1213 702h9zM1214 699h7M1215 696h5" fill="none" stroke="#204090" stroke-width="1.300"/>
<path d="M1213 687c-2 2-2 5 2 7M1222 687c2 2 2 5-2 7M1215 687c-1 2 0 4 2 4M1220 687c1 2 0 4-2 4" fill="none" stroke="#d02020"/>
<text x="1228" y="700" style="font-size:13px;letter-spacing:.3px">收002932日线</text>
<!-- status2 -->
<text x="13" y="722" style="letter-spacing:.22px">[五月十九] 时间:20230706 开:25.7400 高:25.8300 低:25.4000 收:25.4100 手:12727 额:32535180.00 换:0.00 涨:-1.24 盘:0 标:43.4023</text>
</svg>
</body></html>
